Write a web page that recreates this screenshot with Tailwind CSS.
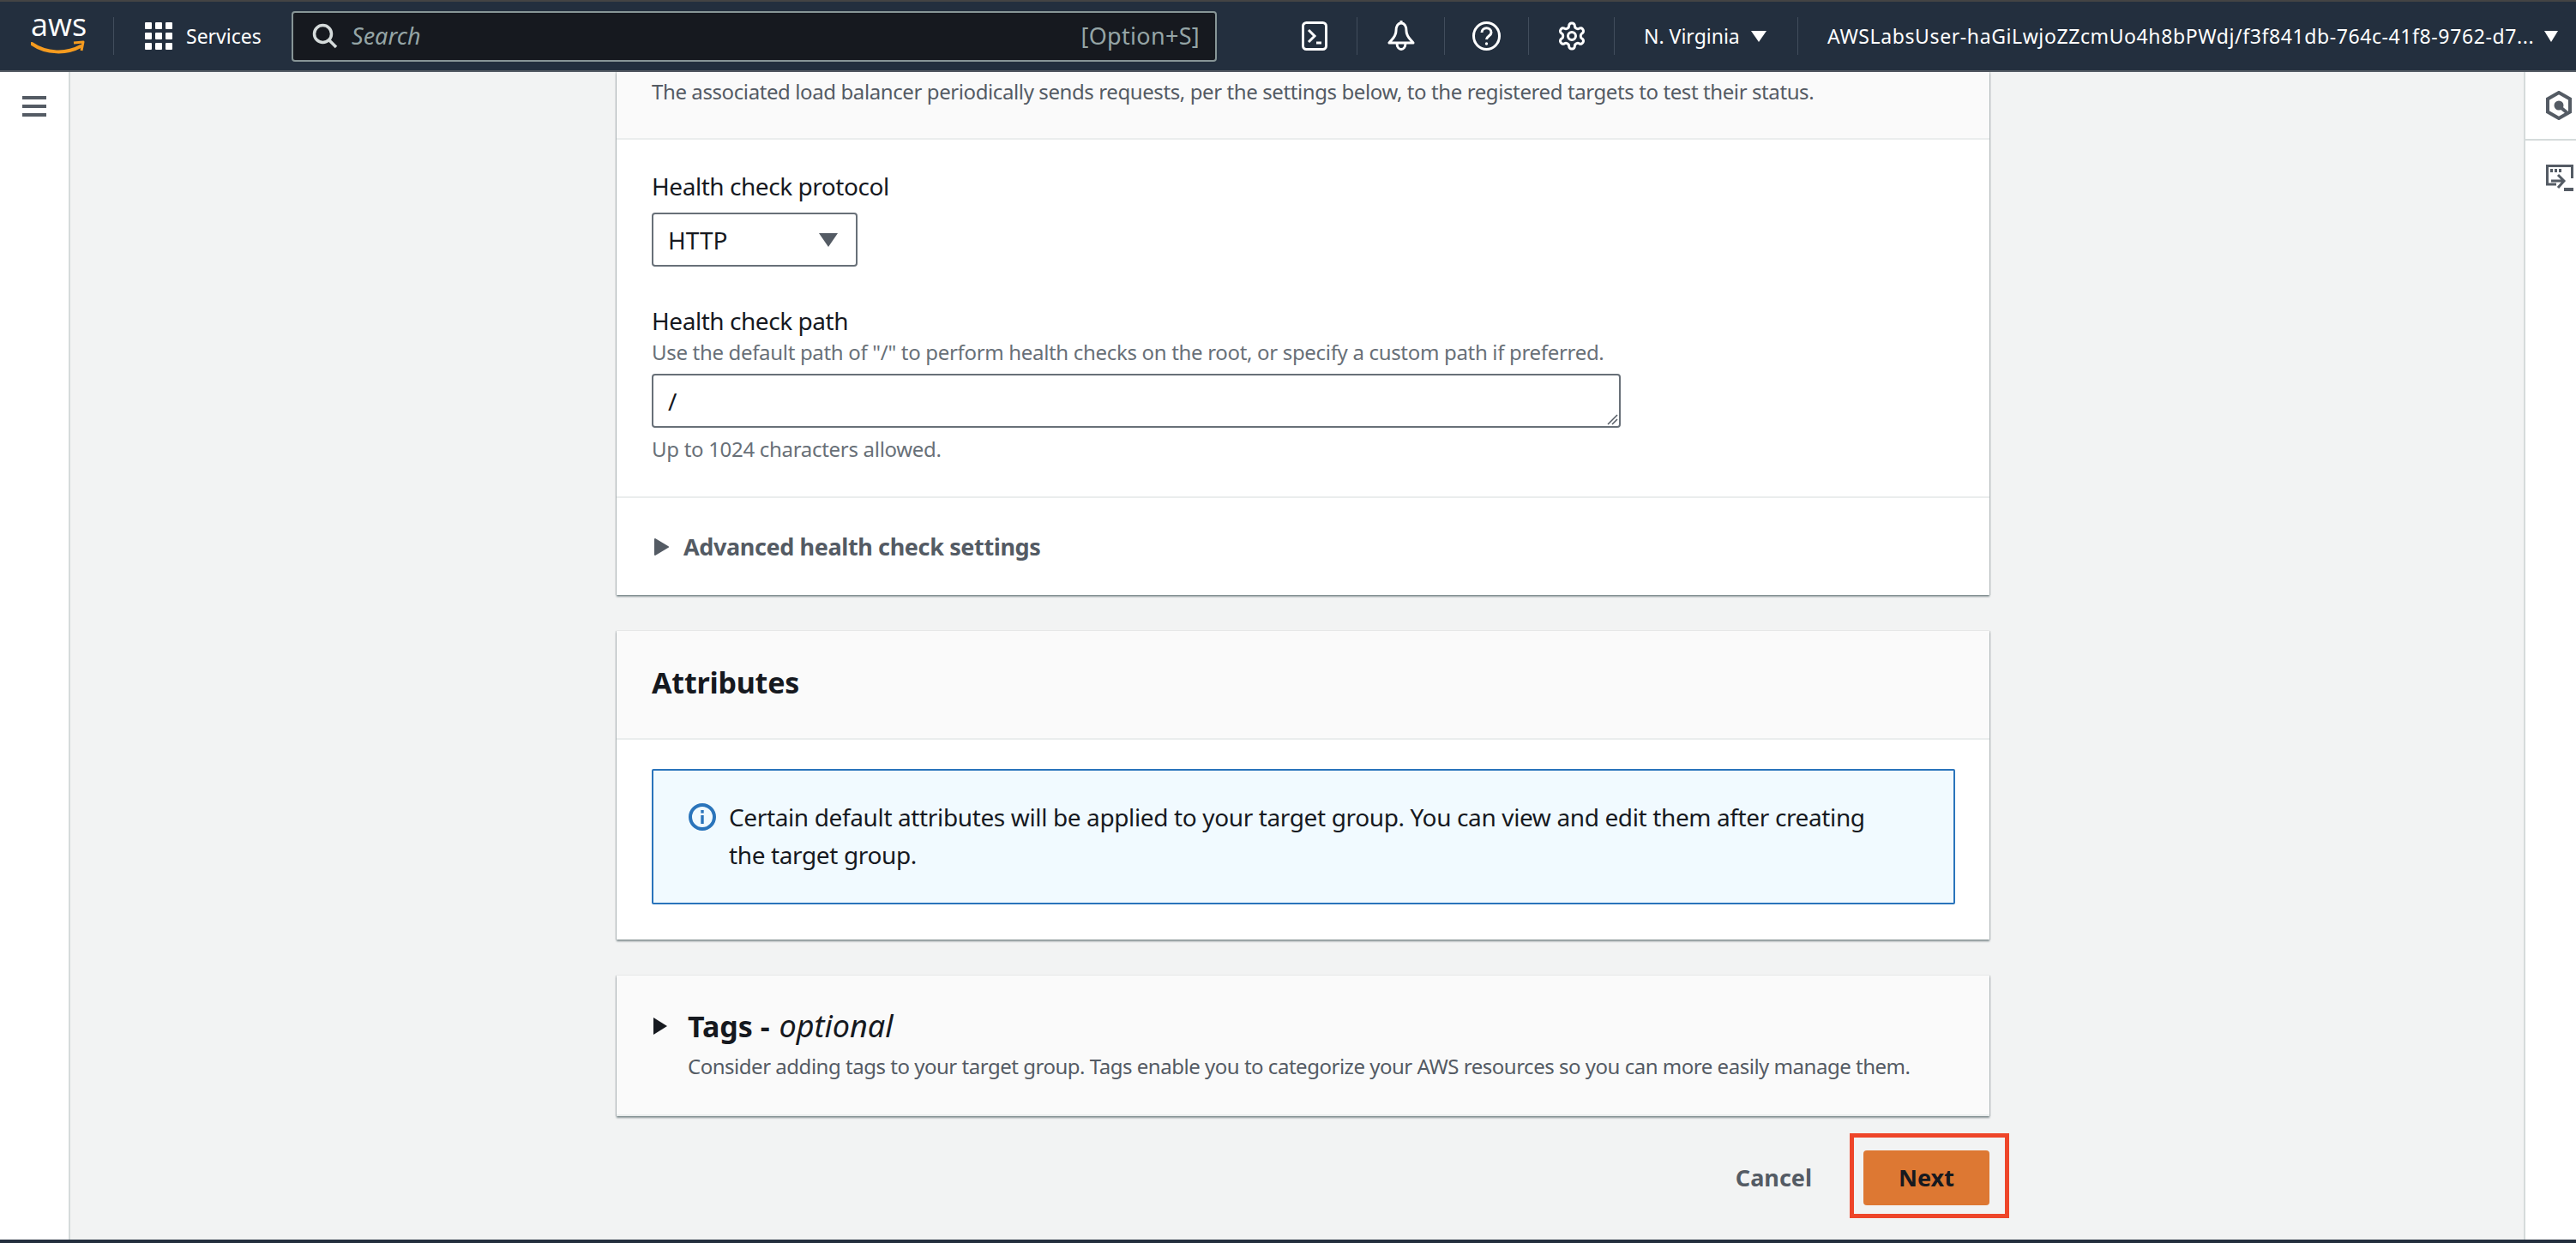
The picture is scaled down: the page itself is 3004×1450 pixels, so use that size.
<!doctype html>
<html>
<head>
<meta charset="utf-8">
<script src="https://cdn.jsdelivr.net/npm/@tailwindcss/browser@4"></script>
</head>
<body class="w-[3004px] h-[1450px] overflow-hidden bg-[#f2f3f3] font-['Noto_Sans',sans-serif]">
<div class="flex flex-col h-[1450px]">
  <!-- top nav -->
  <header class="h-[84px] shrink-0 bg-[#232f3e] border-t-2 border-b-2 border-t-[#444] border-b-[#545b64] flex items-center text-white text-[23px]">
    <div class="w-[132px] h-full flex items-center pl-[36px] shrink-0">
      <div class="relative w-[62px] h-[56px]">
        <span class="absolute left-0 top-[-7px] text-[36px] leading-[44px] text-white font-['Open_Sans',sans-serif]">aws</span>
        <svg class="absolute left-0 top-[33px]" width="64" height="20" viewBox="0 0 64 20" fill="none"><path d="M1 4 C18 16 42 16 58 7" stroke="#f59b1f" stroke-width="4" stroke-linecap="round"/><path d="M50 3 L61 2 L59 12" stroke="#f59b1f" stroke-width="3" stroke-linejoin="round"/></svg>
      </div>
    </div>
    <div class="w-px h-[44px] bg-[#414d5c] shrink-0"></div>
    <div class="flex items-center ml-[36px] gap-[16px] shrink-0 w-[171px]">
      <svg width="32" height="32" viewBox="0 0 32 32" fill="#fff"><rect x="0" y="0" width="8" height="8" rx="1"/><rect x="12" y="0" width="8" height="8" rx="1"/><rect x="24" y="0" width="8" height="8" rx="1"/><rect x="0" y="12" width="8" height="8" rx="1"/><rect x="12" y="12" width="8" height="8" rx="1"/><rect x="24" y="12" width="8" height="8" rx="1"/><rect x="0" y="24" width="8" height="8" rx="1"/><rect x="12" y="24" width="8" height="8" rx="1"/><rect x="24" y="24" width="8" height="8" rx="1"/></svg>
      <span class="text-[23px]">Services</span>
    </div>
    <div class="w-[1079px] h-[59px] rounded-[4px] border-2 border-[#879596] bg-[#16191f] flex items-center pl-[22px] pr-[18px] shrink-0">
      <svg width="30" height="30" viewBox="0 0 30 30" fill="none" stroke="#d5dbdb" stroke-width="3.5"><circle cx="12.5" cy="12.5" r="10"/><path d="M20 20 L28 28"/></svg>
      <span class="ml-[16px] italic text-[#95a5a6] text-[27px]">Search</span>
      <span class="ml-auto text-[#95a5a6] text-[27px] tracking-[0.3px]">[Option+S]</span>
    </div>
    <div class="w-[129px] shrink-0 flex justify-end">
      <svg width="30" height="34" viewBox="0 0 30 34" fill="none" stroke="#fff" stroke-width="3"><rect x="1.5" y="1.5" width="27" height="31" rx="4"/><path d="M8 10 L15 17 L8 24" stroke-width="3"/><path d="M17 25 H23"/></svg>
    </div>
    <div class="w-[34px] shrink-0"></div>
    <div class="w-px h-[44px] bg-[#414d5c] shrink-0"></div>
    <div class="w-[101px] shrink-0 flex justify-center">
      <svg width="32" height="36" viewBox="0 0 32 36" fill="none" stroke="#fff" stroke-width="3" stroke-linejoin="round"><path d="M16 3 C12 3 10 7 10 12 C10 19 5 22 2 26 H30 C27 22 22 19 22 12 C22 7 20 3 16 3 Z"/><path d="M16 0 V4"/><path d="M11 26 C11 36 21 36 21 26"/></svg>
    </div>
    <div class="w-px h-[44px] bg-[#414d5c] shrink-0"></div>
    <div class="w-[97px] shrink-0 flex justify-center">
      <svg width="33" height="34" viewBox="0 0 33 34" fill="none" stroke="#fff" stroke-width="3"><ellipse cx="16.5" cy="17" rx="15" ry="15.5"/><path d="M11 13 C11 6 22 6 22 13 C22 17 16.5 17 16.5 21" stroke-width="3"/><circle cx="16.5" cy="26" r="1.7" fill="#fff" stroke="none"/></svg>
    </div>
    <div class="w-px h-[44px] bg-[#414d5c] shrink-0"></div>
    <div class="w-[99px] shrink-0 flex justify-center">
      <svg width="36" height="36" viewBox="0 0 24 24" fill="none" stroke="#fff" stroke-width="2"><path d="M12.22 2h-.44a2 2 0 0 0-2 2v.18a2 2 0 0 1-1 1.73l-.43.25a2 2 0 0 1-2 0l-.15-.08a2 2 0 0 0-2.73.73l-.22.38a2 2 0 0 0 .73 2.73l.15.1a2 2 0 0 1 1 1.72v.51a2 2 0 0 1-1 1.74l-.15.09a2 2 0 0 0-.73 2.73l.22.38a2 2 0 0 0 2.73.73l.15-.08a2 2 0 0 1 2 0l.43.25a2 2 0 0 1 1 1.73V20a2 2 0 0 0 2 2h.44a2 2 0 0 0 2-2v-.18a2 2 0 0 1 1-1.73l.43-.25a2 2 0 0 1 2 0l.15.08a2 2 0 0 0 2.73-.73l.22-.39a2 2 0 0 0-.73-2.73l-.15-.08a2 2 0 0 1-1-1.74v-.5a2 2 0 0 1 1-1.74l.15-.09a2 2 0 0 0 .73-2.73l-.22-.38a2 2 0 0 0-2.73-.73l-.15.08a2 2 0 0 1-2 0l-.43-.25a2 2 0 0 1-1-1.73V4a2 2 0 0 0-2-2z"/><circle cx="12" cy="12" r="3"/></svg>
    </div>
    <div class="w-px h-[44px] bg-[#414d5c] shrink-0"></div>
    <div class="w-[213px] shrink-0 flex items-center pl-[34px] gap-[12px] whitespace-nowrap">
      <span>N. Virginia</span>
      <svg width="20" height="15" viewBox="0 0 20 15" fill="#fff"><path d="M1 1 H19 L10 14 Z"/></svg>
    </div>
    <div class="w-px h-[44px] bg-[#414d5c] shrink-0"></div>
    <div class="flex items-center pl-[34px] gap-[12px] whitespace-nowrap">
      <span class="tracking-[0.6px]">AWSLabsUser-haGiLwjoZZcmUo4h8bPWdj/f3f841db-764c-41f8-9762-d7...</span>
      <svg width="16" height="15" viewBox="0 0 16 15" fill="#fff"><path d="M0 1 H16 L8 14 Z"/></svg>
    </div>
  </header>

  <div class="flex flex-1 min-h-0">
    <!-- left rail -->
    <aside class="w-[82px] shrink-0 bg-white border-r-2 border-[#d5dbdb] pt-[28px] pl-[26px]">
      <svg width="28" height="24" viewBox="0 0 28 24" fill="#545b64"><rect width="28" height="4"/><rect y="10" width="28" height="4"/><rect y="20" width="28" height="4"/></svg>
    </aside>

    <!-- main -->
    <main class="flex-1 min-w-0 pl-[637px]">
      <div class="w-[1601px] flex flex-col">
        <!-- Card 1 -->
        <section class="bg-white h-[610px] shadow-[0_2px_2px_rgba(0,28,36,0.45),1px_0_1px_rgba(0,28,36,0.15),-1px_0_1px_rgba(0,28,36,0.15)]">
          <div class="h-[79px] bg-[#fafafa] border-b-2 border-[#eaeded] px-[41px] pt-[3px] text-[24px] leading-[40px] tracking-[-0.4px] text-[#545b64] whitespace-nowrap">The associated load balancer periodically sends requests, per the settings below, to the registered targets to test their status.</div>
          <div class="px-[41px] pt-[34px] h-[418px] border-b-2 border-[#eaeded]">
            <div class="text-[28px] leading-[40px] tracking-[-0.45px] text-[#16191f]">Health check protocol</div>
            <div class="mt-[11px] w-[240px] h-[63px] border-2 border-[#687078] rounded-[4px] flex items-center justify-between pl-[17px] pr-[21px] text-[28px] text-[#16191f] bg-white">
              <span>HTTP</span>
              <svg width="22" height="17" viewBox="0 0 22 17" fill="#545b64"><path d="M0 1 H22 L11 17 Z"/></svg>
            </div>
            <div class="mt-[43px] text-[28px] leading-[40px] tracking-[-0.45px] text-[#16191f]">Health check path</div>
            <div class="text-[24px] leading-[36px] tracking-[-0.32px] text-[#687078] mt-[-1px] whitespace-nowrap">Use the default path of "/" to perform health checks on the root, or specify a custom path if preferred.</div>
            <div class="relative mt-[7px] w-[1130px] h-[63px] border-2 border-[#687078] rounded-[4px] flex items-center pl-[17px] text-[28px] text-[#16191f]">
              <span>/</span>
              <svg class="absolute right-[1px] bottom-[1px]" width="14" height="14" viewBox="0 0 14 14" stroke="#545b64" stroke-width="1.5"><path d="M2 13 L13 2 M7 13 L13 7"/></svg>
            </div>
            <div class="text-[24px] leading-[36px] tracking-[-0.3px] text-[#687078] mt-[7px]">Up to 1024 characters allowed.</div>
          </div>
          <div class="px-[41px] h-[111px] flex items-center text-[#545b64] pt-[2px]">
            <svg class="ml-[3px]" width="17" height="20" viewBox="0 0 17 20" fill="#545b64" stroke="#545b64" stroke-width="2" stroke-linejoin="round"><path d="M1 1 L16 10 L1 19 Z"/></svg>
            <span class="ml-[17px] text-[27px] font-bold leading-[40px] tracking-[-0.38px]">Advanced health check settings</span>
          </div>
        </section>

        <!-- Card 2 -->
        <section class="mt-[42px] bg-white h-[360px] shadow-[0_2px_2px_rgba(0,28,36,0.45),1px_0_1px_rgba(0,28,36,0.15),-1px_0_1px_rgba(0,28,36,0.15)]">
          <div class="h-[127px] bg-[#fafafa] border-b-2 border-[#eaeded] px-[41px] pb-[4px] flex items-center text-[34px] font-bold tracking-[-0.2px] text-[#16191f]">Attributes</div>
          <div class="px-[41px] pt-[34px]">
            <div class="h-[158px] w-[1520px] border-2 border-[#2a74bb] rounded-[2px] bg-[#f1faff] flex pl-[41px] pt-[32px] pr-[50px]">
              <svg class="shrink-0 mt-[6px]" width="32" height="32" viewBox="0 0 32 32" fill="none"><circle cx="16" cy="16" r="14" stroke="#2a74bb" stroke-width="4"/><rect x="14.3" y="14" width="3.4" height="10" fill="#2a74bb"/><rect x="14.3" y="8" width="3.4" height="3.6" fill="#2a74bb"/></svg>
              <p class="ml-[15px] text-[28px] leading-[44px] tracking-[-0.37px] text-[#16191f] w-[1360px]">Certain default attributes will be applied to your target group. You can view and edit them after creating the target group.</p>
            </div>
          </div>
        </section>

        <!-- Card 3 -->
        <section class="mt-[42px] h-[164px] bg-[#fafafa] border-b-2 border-[#eaeded] px-[41px] pt-[34px] shadow-[0_2px_2px_rgba(0,28,36,0.45),1px_0_1px_rgba(0,28,36,0.15),-1px_0_1px_rgba(0,28,36,0.15)]">
          <div class="flex items-center">
            <svg class="ml-[2px]" width="16" height="20" viewBox="0 0 16 20" fill="#16191f"><path d="M0 0 L16 10 L0 20 Z"/></svg>
            <span class="ml-[24px] text-[34px] leading-[50px] font-bold text-[#16191f]">Tags - <em class="font-normal italic text-[36px] ml-[2px]">optional</em></span>
          </div>
          <div class="ml-[42px] mt-[4px] text-[24px] leading-[36px] tracking-[-0.48px] text-[#545b64] whitespace-nowrap">Consider adding tags to your target group. Tags enable you to categorize your AWS resources so you can more easily manage them.</div>
        </section>

        <!-- Actions -->
        <div class="flex justify-end items-center mt-[40px] gap-[60px]">
          <span class="text-[27px] font-bold text-[#545b64]">Cancel</span>
          <div class="relative w-[147px] h-[64px] rounded-[4px] bg-[#dd7833] flex items-center justify-center text-[27px] font-bold text-[#16191f]">
            Next
            <div class="absolute left-[-16px] top-[-20px] w-[186px] h-[99px] border-[5px] border-[#ee4529]"></div>
          </div>
        </div>
      </div>
    </main>

    <!-- right rail -->
    <aside class="w-[61px] shrink-0 bg-white border-l-2 border-[#d5dbdb] overflow-hidden">
      <div class="h-[80px] border-b-2 border-[#d5dbdb] flex items-center pl-[24px] pb-[1px]">
        <svg class="shrink-0" width="30" height="34" viewBox="0 0 30 34" fill="none" stroke="#545b64" stroke-width="4"><path d="M15 2 L28 9.5 V24.5 L15 32 L2 24.5 V9.5 Z"/><circle cx="15" cy="17" r="4" fill="#545b64" stroke-width="3"/><path d="M18 20 L24 25" stroke-width="4"/></svg>
      </div>
      <div class="pt-[28px] pl-[24px]">
        <svg class="shrink-0" width="32" height="32" viewBox="0 0 32 32" fill="none" stroke="#545b64" stroke-width="3"><path d="M12 23 H1.5 V1.5 H30.5 V16"/><rect x="5" y="5" width="3" height="4" fill="#545b64" stroke="none"/><rect x="10" y="5" width="3" height="4" fill="#545b64" stroke="none"/><rect x="15" y="5" width="3" height="4" fill="#545b64" stroke="none"/><path d="M6 19 H20 M14 12 L21 19 L14 27" stroke-width="3"/><path d="M21 29 H32" stroke-width="4"/></svg>
      </div>
    </aside>
  </div>
  <div class="h-[4px] shrink-0 bg-[#232f3e]"></div>
</div>
</body>
</html>
